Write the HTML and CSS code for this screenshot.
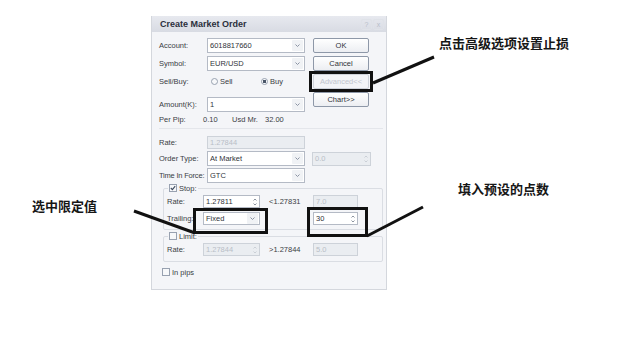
FILE: index.html
```html
<!DOCTYPE html>
<html lang="zh-CN">
<head>
    <meta charset="UTF-8">
    <meta name="viewport" content="width=device-width, initial-scale=1.0">
    <title>Create Market Order</title>
    <link rel="stylesheet" href="styles.css">
</head>
<body>
    <div class="page">
        <div class="dialog">
            <div class="titlebar">
                <span class="title">Create Market Order</span>
                <span class="title-btns"><span class="tbtn">?</span><span class="tbtn">x</span></span>
            </div>
            <div class="dialog-body">
                <div class="top">
                    <div class="form">
                        <div class="row">
                            <span class="label">Account:</span>
                            <div class="combo"><span class="val">6018817660</span><span class="drop"><svg width="5" height="3" viewBox="0 0 5 3"><path d="M0.5 0.5 L2.5 2.5 L4.5 0.5" fill="none" stroke="#8a93a3" stroke-width="1"/></svg></span></div>
                        </div>
                        <div class="row">
                            <span class="label">Symbol:</span>
                            <div class="combo"><span class="val">EUR/USD</span><span class="drop"><svg width="5" height="3" viewBox="0 0 5 3"><path d="M0.5 0.5 L2.5 2.5 L4.5 0.5" fill="none" stroke="#8a93a3" stroke-width="1"/></svg></span></div>
                        </div>
                        <div class="row">
                            <span class="label">Sell/Buy:</span>
                            <span class="radio-item sell"><span class="radio"></span>Sell</span>
                            <span class="radio-item"><span class="radio checked"></span>Buy</span>
                        </div>
                        <div class="row amount">
                            <span class="label">Amount(K):</span>
                            <div class="combo"><span class="val">1</span><span class="drop"><svg width="5" height="3" viewBox="0 0 5 3"><path d="M0.5 0.5 L2.5 2.5 L4.5 0.5" fill="none" stroke="#8a93a3" stroke-width="1"/></svg></span></div>
                        </div>
                        <div class="row pip">
                            <span class="label pip-label">Per Pip:</span>
                            <span class="pip-val">0.10</span>
                            <span class="pip-mr">Usd Mr.</span>
                            <span>32.00</span>
                        </div>
                    </div>
                    <div class="buttons">
                        <div class="btn">OK</div>
                        <div class="btn">Cancel</div>
                        <div class="btn disabled">Advanced&lt;&lt;</div>
                        <div class="btn">Chart&gt;&gt;</div>
                    </div>
                </div>

                <div class="sep"></div>

                <div class="row low">
                    <span class="label">Rate:</span>
                    <div class="field disabled wide">1.27844</div>
                </div>
                <div class="row low order">
                    <span class="label">Order Type:</span>
                    <div class="combo"><span class="val">At Market</span><span class="drop"><svg width="5" height="3" viewBox="0 0 5 3"><path d="M0.5 0.5 L2.5 2.5 L4.5 0.5" fill="none" stroke="#8a93a3" stroke-width="1"/></svg></span></div>
                    <div class="spin disabled slip"><span class="val">0.0</span><span class="arrows"><svg width="4" height="8" viewBox="0 0 4 8"><path d="M0.5 2.5 L2 1 L3.5 2.5 M0.5 5.5 L2 7 L3.5 5.5" fill="none" stroke="#c2c7cf" stroke-width="0.8"/></svg></span></div>
                </div>
                <div class="row low">
                    <span class="label tight">Time In Force:</span>
                    <div class="combo"><span class="val">GTC</span><span class="drop"><svg width="5" height="3" viewBox="0 0 5 3"><path d="M0.5 0.5 L2.5 2.5 L4.5 0.5" fill="none" stroke="#8a93a3" stroke-width="1"/></svg></span></div>
                </div>

                <fieldset class="group stop">
                    <legend><span class="check on"><svg width="6" height="6" viewBox="0 0 6 6"><path d="M0.8 3 L2.4 4.6 L5.2 1.2" fill="none" stroke="#3d4a5e" stroke-width="1.1"/></svg></span>Stop:</legend>
                    <div class="grow">
                        <span class="glabel">Rate:</span>
                        <div class="spin"><span class="val">1.27811</span><span class="arrows"><svg width="4" height="8" viewBox="0 0 4 8"><path d="M0.5 2.5 L2 1 L3.5 2.5 M0.5 5.5 L2 7 L3.5 5.5" fill="none" stroke="#6f7888" stroke-width="0.8"/></svg></span></div>
                        <span class="hint">&lt;1.27831</span>
                        <div class="field disabled small">7.0</div>
                    </div>
                    <div class="grow">
                        <span class="glabel">Trailing:</span>
                        <div class="combo short"><span class="val">Fixed</span><span class="drop"><svg width="5" height="3" viewBox="0 0 5 3"><path d="M0.5 0.5 L2.5 2.5 L4.5 0.5" fill="none" stroke="#8a93a3" stroke-width="1"/></svg></span></div>
                        <span class="hint"></span>
                        <div class="spin small"><span class="val">30</span><span class="arrows"><svg width="4" height="8" viewBox="0 0 4 8"><path d="M0.5 2.5 L2 1 L3.5 2.5 M0.5 5.5 L2 7 L3.5 5.5" fill="none" stroke="#6f7888" stroke-width="0.8"/></svg></span></div>
                    </div>
                </fieldset>

                <fieldset class="group limit">
                    <legend><span class="check"></span>Limit:</legend>
                    <div class="grow">
                        <span class="glabel">Rate:</span>
                        <div class="spin disabled"><span class="val">1.27844</span><span class="arrows"><svg width="4" height="8" viewBox="0 0 4 8"><path d="M0.5 2.5 L2 1 L3.5 2.5 M0.5 5.5 L2 7 L3.5 5.5" fill="none" stroke="#c2c7cf" stroke-width="0.8"/></svg></span></div>
                        <span class="hint">&gt;1.27844</span>
                        <div class="field disabled small">5.0</div>
                    </div>
                </fieldset>

                <div class="pips"><span class="check"></span>In pips</div>
            </div>
        </div>

        <!-- annotations drawn over the screenshot -->
        <div class="note note-adv">点击高级选项设置止损</div>
        <div class="note note-fixed">选中限定值</div>
        <div class="note note-pips">填入预设的点数</div>
        <svg class="marks" width="623" height="353" viewBox="0 0 623 353">
            <g fill="none" stroke="#111" stroke-width="3">
                <rect x="310.5" y="72.5" width="61" height="18"/>
                <rect x="194.5" y="209.5" width="72" height="23"/>
                <rect x="308.5" y="208.5" width="58" height="27"/>
                <line x1="373" y1="83" x2="434" y2="57"/>
                <line x1="134" y1="211" x2="195" y2="233"/>
                <line x1="367" y1="236" x2="423" y2="207"/>
            </g>
        </svg>
    </div>
</body>
</html>
```

FILE: styles.css
```css
* {
    box-sizing: border-box;
    margin: 0;
    padding: 0;
}

body {
    background: #ffffff;
    font-family: 'Liberation Sans', Arial, sans-serif;
    color: #3a3d44;
}

.page {
    position: relative;
    width: 623px;
    height: 353px;
    overflow: hidden;
    padding: 16px 0 0 151px;
}

/* dialog window */
.dialog {
    width: 236px;
    height: 274px;
    background: #f4f5f8;
    border: 1px solid #d4d7dd;
    border-top: none;
}

.titlebar {
    height: 16px;
    display: flex;
    align-items: center;
    justify-content: space-between;
    padding: 0 2px 0 8px;
    background: linear-gradient(#e7e9ef, #d8dbe3);
}

.title {
    font-size: 9px;
    font-weight: bold;
    color: #2b2f3c;
}

.title-btns {
    display: flex;
    gap: 1px;
}

.tbtn {
    width: 11px;
    height: 11px;
    border: 1px solid #dfe2e8;
    border-radius: 2px;
    font-size: 7px;
    line-height: 9px;
    text-align: center;
    color: #b8bec9;
}

.dialog-body {
    padding: 4px 0 0 7px;
    font-size: 7.5px;
}

.top {
    display: flex;
    height: 90px;
}

.form {
    width: 146px;
}

.row {
    display: flex;
    align-items: center;
    height: 18px;
    white-space: nowrap;
}

.row.amount {
    margin-top: 5px;
}

.row.pip {
    height: 13px;
}

.row.low {
    height: 16px;
}

.row.order {
    height: 17px;
}

.label {
    width: 48px;
}

.label.tight {
    letter-spacing: -0.2px;
}

.pip-label {
    width: 44px;
}

.pip-val {
    width: 29px;
}

.pip-mr {
    width: 33px;
}

/* combo boxes and inputs */
.combo,
.field,
.spin {
    display: flex;
    align-items: center;
    height: 15px;
    background: #ffffff;
    border: 1px solid #b4bac5;
    padding-left: 2px;
    color: #30333a;
}

.combo {
    width: 98px;
}

.combo .val,
.spin .val {
    flex: 1;
}

.drop {
    display: flex;
    align-items: center;
    justify-content: center;
    width: 11px;
    height: 11px;
    margin-right: 1px;
    background: #f0f2f5;
    border-radius: 1px;
}

.arrows {
    display: flex;
    align-items: center;
    justify-content: center;
    width: 8px;
    height: 11px;
}

.field.disabled,
.spin.disabled {
    background: #eaedf1;
    border-color: #cdd2d9;
    color: #b9bec7;
}

.field.wide {
    width: 98px;
    height: 13px;
}

.spin.slip {
    width: 59px;
    height: 14px;
    margin-left: 7px;
}

/* radio buttons */
.radio-item {
    display: flex;
    align-items: center;
    gap: 2px;
}

.radio-item.sell {
    width: 50px;
    margin-left: 4px;
}

.radio {
    width: 7px;
    height: 7px;
    border: 1px solid #98a1b0;
    border-radius: 50%;
    background: #f7f8fa;
}

.radio.checked {
    background: radial-gradient(circle, #4a5568 0 1.6px, #f7f8fa 2px);
}

/* right button column */
.buttons {
    display: flex;
    flex-direction: column;
    gap: 3px;
    width: 56px;
    margin-left: 8px;
    padding-top: 2px;
}

.btn {
    height: 15px;
    border: 1px solid #8e98a8;
    border-radius: 2px;
    background: linear-gradient(#ffffff, #eceef2);
    font-size: 7.5px;
    line-height: 13px;
    text-align: center;
    color: #2e3138;
}

.btn.disabled {
    border-color: #cfd3da;
    color: #c2c6ce;
    background: #f3f4f7;
}

.sep {
    height: 1px;
    margin: 2px 3px 5px 0;
    background: #e4e6eb;
}

/* stop / limit groups */
.group {
    width: 220px;
    margin-left: 4px;
    border: 1px solid #dadde3;
    border-radius: 2px;
    padding: 0 0 2px 0;
    min-width: 0;
}

.group.limit {
    margin-top: 1px;
    padding-bottom: 3px;
}

.group legend {
    display: flex;
    align-items: center;
    gap: 2px;
    height: 10px;
    margin-left: 4px;
    padding: 0 1px;
    font-size: 7.5px;
}

.check {
    display: flex;
    align-items: center;
    justify-content: center;
    width: 8px;
    height: 8px;
    border: 1px solid #98a1b0;
    background: #f7f8fa;
}

.grow {
    display: flex;
    align-items: center;
    height: 17px;
    padding-left: 3px;
    white-space: nowrap;
}

.glabel {
    width: 36px;
}

.grow .spin,
.combo.short {
    width: 57px;
    height: 13px;
}

.hint {
    width: 44px;
    margin-left: 9px;
}

.field.small,
.spin.small {
    width: 45px;
    height: 13px;
}

.pips {
    display: flex;
    align-items: center;
    gap: 2px;
    height: 14px;
    margin: 3px 0 0 3px;
}

/* annotations */
.note {
    position: absolute;
    font-family: 'Noto Sans CJK SC', sans-serif;
    font-size: 13px;
    line-height: 13px;
    font-weight: bold;
    color: #161616;
    white-space: nowrap;
}

.note-adv {
    left: 439px;
    top: 36px;
}

.note-fixed {
    left: 32px;
    top: 199px;
}

.note-pips {
    left: 458px;
    top: 182px;
}

.marks {
    position: absolute;
    left: 0;
    top: 0;
}
```
